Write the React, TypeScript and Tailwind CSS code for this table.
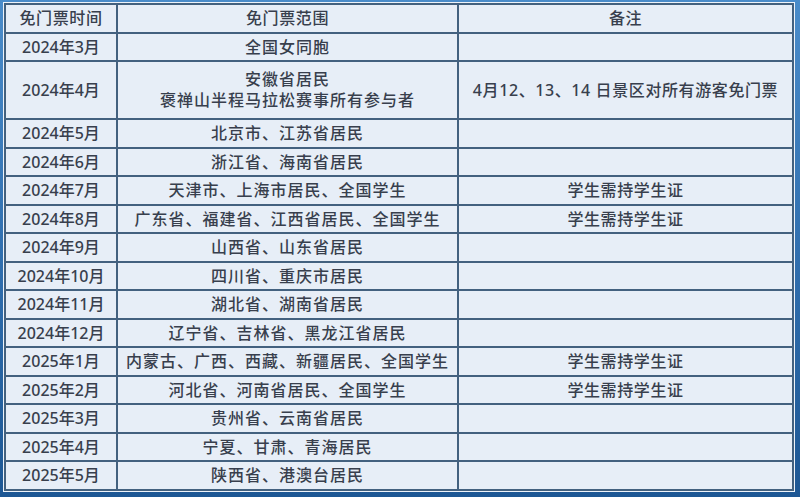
const rows: { time: string; scope: string[]; note?: string; h: string }[] = [
  { time: "2024年3月", scope: ["全国女同胞"], h: "h-[28px]" },
  {
    time: "2024年4月",
    scope: ["安徽省居民", "褒禅山半程马拉松赛事所有参与者"],
    note: "4月12、13、14 日景区对所有游客免门票",
    h: "h-[58px]",
  },
  { time: "2024年5月", scope: ["北京市、江苏省居民"], h: "h-[29px]" },
  { time: "2024年6月", scope: ["浙江省、海南省居民"], h: "h-[28px]" },
  { time: "2024年7月", scope: ["天津市、上海市居民、全国学生"], note: "学生需持学生证", h: "h-[29px]" },
  { time: "2024年8月", scope: ["广东省、福建省、江西省居民、全国学生"], note: "学生需持学生证", h: "h-[28px]" },
  { time: "2024年9月", scope: ["山西省、山东省居民"], h: "h-[29px]" },
  { time: "2024年10月", scope: ["四川省、重庆市居民"], h: "h-[28px]" },
  { time: "2024年11月", scope: ["湖北省、湖南省居民"], h: "h-[29px]" },
  { time: "2024年12月", scope: ["辽宁省、吉林省、黑龙江省居民"], h: "h-[28px]" },
  { time: "2025年1月", scope: ["内蒙古、广西、西藏、新疆居民、全国学生"], note: "学生需持学生证", h: "h-[29px]" },
  { time: "2025年2月", scope: ["河北省、河南省居民、全国学生"], note: "学生需持学生证", h: "h-[28px]" },
  { time: "2025年3月", scope: ["贵州省、云南省居民"], h: "h-[29px]" },
  { time: "2025年4月", scope: ["宁夏、甘肃、青海居民"], h: "h-[28px]" },
  { time: "2025年5月", scope: ["陕西省、港澳台居民"], h: "h-[29px]" },
];

const cell = "border-2 border-[#43617f] text-center align-middle p-0";

export default function App() {
  return (
    <div
      className="w-[800px] h-[497px] overflow-hidden bg-gradient-to-b from-[#4a8cca] via-[#3170b0] to-[#1d5794] pt-[3px] pl-[4px] pr-[6px] pb-[6px] text-[16px] font-medium text-[#383f4d] tracking-[1px]"
      style={{ fontFamily: '"Noto Sans", "Noto Sans CJK SC", sans-serif' }}
    >
      <table className="w-full border-collapse bg-[#e7eef7] outline outline-1 outline-[#eef3f9] leading-[21px]">
        <colgroup>
          <col className="w-[112px]" />
          <col className="w-[341px]" />
          <col />
        </colgroup>
        <thead>
          <tr className="h-[29px]">
            <th className={`${cell} font-medium tracking-[0.6px]`}>免门票时间</th>
            <th className={`${cell} font-medium tracking-[0.6px]`}>免门票范围</th>
            <th className={`${cell} font-medium tracking-[0.6px]`}>备注</th>
          </tr>
        </thead>
        <tbody>
          {rows.map((r) => (
            <tr key={r.time} className={r.h}>
              <td className={`${cell} tracking-normal`}>{r.time}</td>
              <td className={cell}>
                {r.scope.map((s) => (
                  <div key={s}>{s}</div>
                ))}
              </td>
              <td className={`${cell} tracking-[0.6px]`}>{r.note ?? ""}</td>
            </tr>
          ))}
        </tbody>
      </table>
    </div>
  );
}
